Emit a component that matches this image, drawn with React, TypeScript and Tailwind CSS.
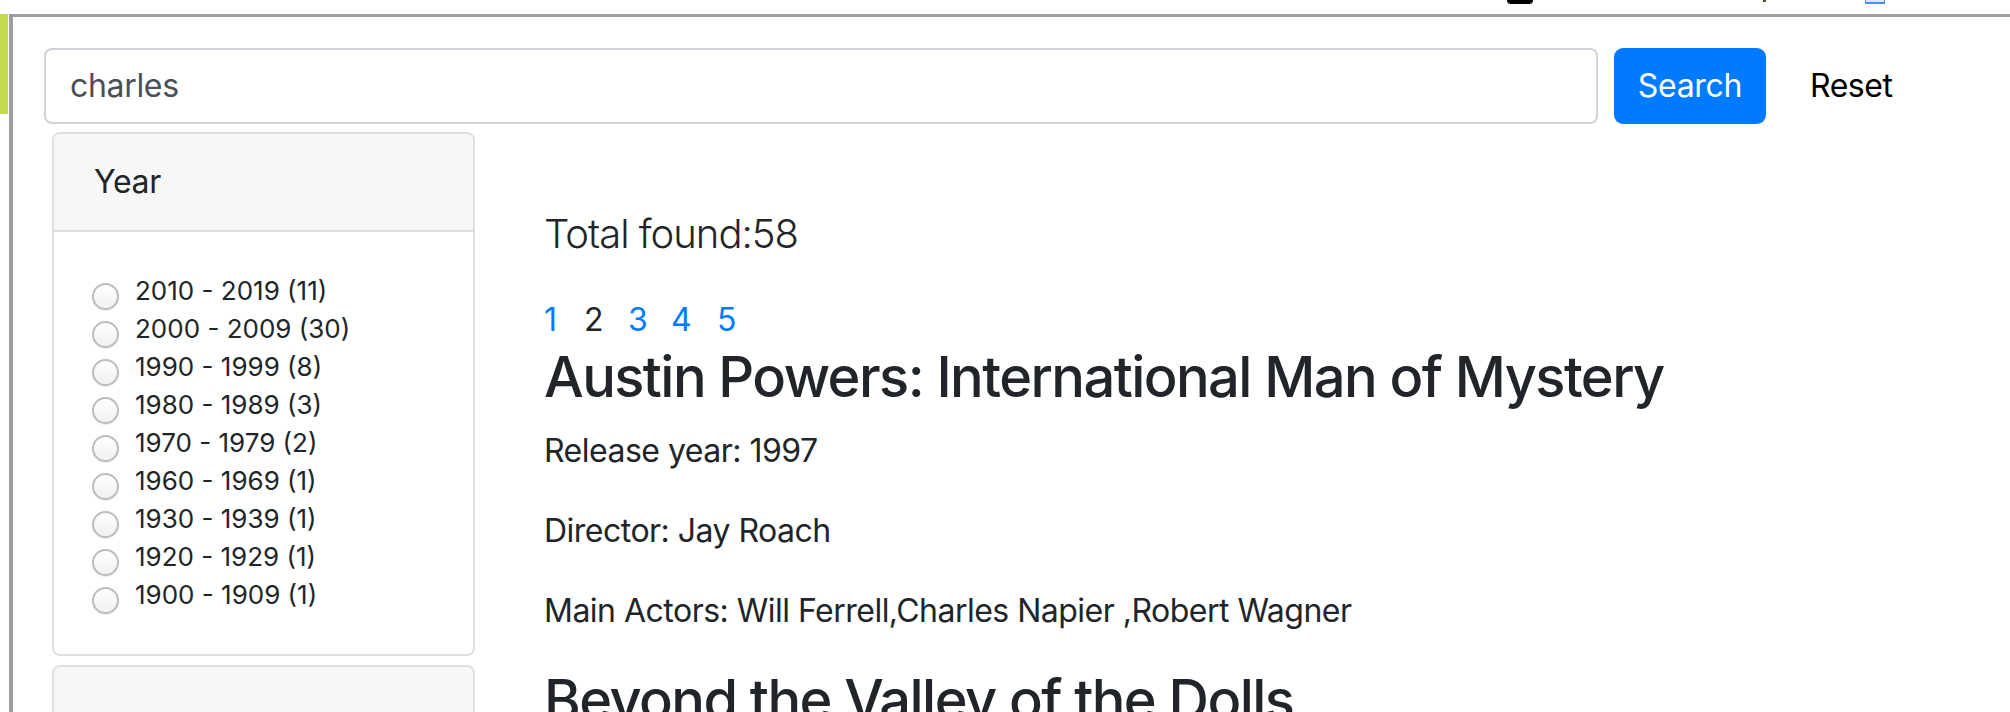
const decades = [
  '2010 - 2019 (11)',
  '2000 - 2009 (30)',
  '1990 - 1999 (8)',
  '1980 - 1989 (3)',
  '1970 - 1979 (2)',
  '1960 - 1969 (1)',
  '1930 - 1939 (1)',
  '1920 - 1929 (1)',
  '1900 - 1909 (1)',
];

const pages = [
  { n: '1', w: 'w-[40px]', active: false },
  { n: '2', w: 'w-[44px]', active: true },
  { n: '3', w: 'w-[43px]', active: false },
  { n: '4', w: 'w-[46px]', active: false },
  { n: '5', w: 'w-[40px]', active: false },
];

function Radio({ label }: { label: string }) {
  return (
    <label className="flex items-start leading-[38px] text-[26px]">
      <span className="mt-[11px] mr-[16px] h-[27px] w-[27px] shrink-0 rounded-full border-2 border-[#bcbcbc] bg-gradient-to-b from-white to-[#f0f0f0] shadow-[0_1px_1px_rgba(0,0,0,0.08)]" />
      <span>{label}</span>
    </label>
  );
}

export default function App() {
  return (
    <div className="h-[712px] overflow-hidden bg-white font-['Inter',sans-serif] text-[#212529]">
      {/* bits of the page above, cut off */}
      <div className="flex h-[14px] items-start">
        <div className="ml-[1507px] h-[4px] w-[26px] rounded-b-full bg-black" />
        <div className="ml-[230px] h-[2px] w-[3px] bg-[#5a4a2a]" />
        <div className="ml-[99px] h-[4px] w-[20px] border-x border-b-2 border-[#4a8ef0] bg-[#dce9fc]" />
      </div>

      <div className="flex">
        <div className="mr-[1px] h-[100px] w-[8px] bg-[#c4da4f]" />
        <div className="h-[698px] flex-1 border-l-[4px] border-t-[3px] border-[#9e9e9e] pl-[31px] pt-[31px]">
          <div className="flex items-center">
            <div className="flex h-[76px] w-[1554px] items-center rounded-[8px] border-2 border-[#ced4da] px-[24px] text-[32px] tracking-[-0.01em] text-[#495057]">
              charles
            </div>
            <button className="ml-[16px] h-[76px] w-[152px] rounded-[9px] bg-[#007bff] text-[32px] tracking-[-0.01em] text-white">
              Search
            </button>
            <button className="ml-[20px] h-[76px] px-[24px] text-[32px] tracking-[-0.015em] text-black">Reset</button>
          </div>

          <div className="mt-[8px] flex">
            <aside className="ml-[8px] w-[423px] shrink-0">
              <div className="overflow-hidden rounded-[8px] border-2 border-[#dfdfdf]">
                <div className="border-b-2 border-[#dfdfdf] bg-[#f7f7f7] px-[40px] py-[24px] text-[32px] leading-[48px] tracking-[-0.01em]">
                  Year
                </div>
                <div className="px-[38px] py-[40px]">
                  {decades.map((d) => (
                    <Radio key={d} label={d} />
                  ))}
                </div>
              </div>
              <div className="mt-[9px] h-[120px] rounded-t-[8px] border-2 border-[#dfdfdf] bg-[#f7f7f7]" />
            </aside>

            <main className="ml-[69px] mt-[72px] tracking-[-0.032em]">
              <p className="mb-[32px] text-[40px] font-light leading-[60px] tracking-[-0.025em]">Total found:58</p>
              <div className="flex text-[32px] leading-[48px] tracking-normal">
                {pages.map((p) => (
                  <span key={p.n} className={`${p.w} ${p.active ? 'text-[#212529]' : 'text-[#007bff]'}`}>
                    {p.n}
                  </span>
                ))}
              </div>
              <h3 className="mb-[16px] text-[56px] font-medium leading-[1.2] tracking-[-0.028em]">
                Austin Powers: International Man of Mystery
              </h3>
              <p className="mb-[32px] text-[32px] leading-[48px]">Release year: 1997</p>
              <p className="mb-[32px] text-[32px] leading-[48px]">Director: Jay Roach</p>
              <p className="mb-[32px] text-[32px] leading-[48px]">
                Main Actors: Will Ferrell,Charles Napier ,Robert Wagner
              </p>
              <h3 className="mb-[16px] text-[56px] font-medium leading-[1.2] tracking-[-0.028em]">
                Beyond the Valley of the Dolls
              </h3>
            </main>
          </div>
        </div>
      </div>
    </div>
  );
}
